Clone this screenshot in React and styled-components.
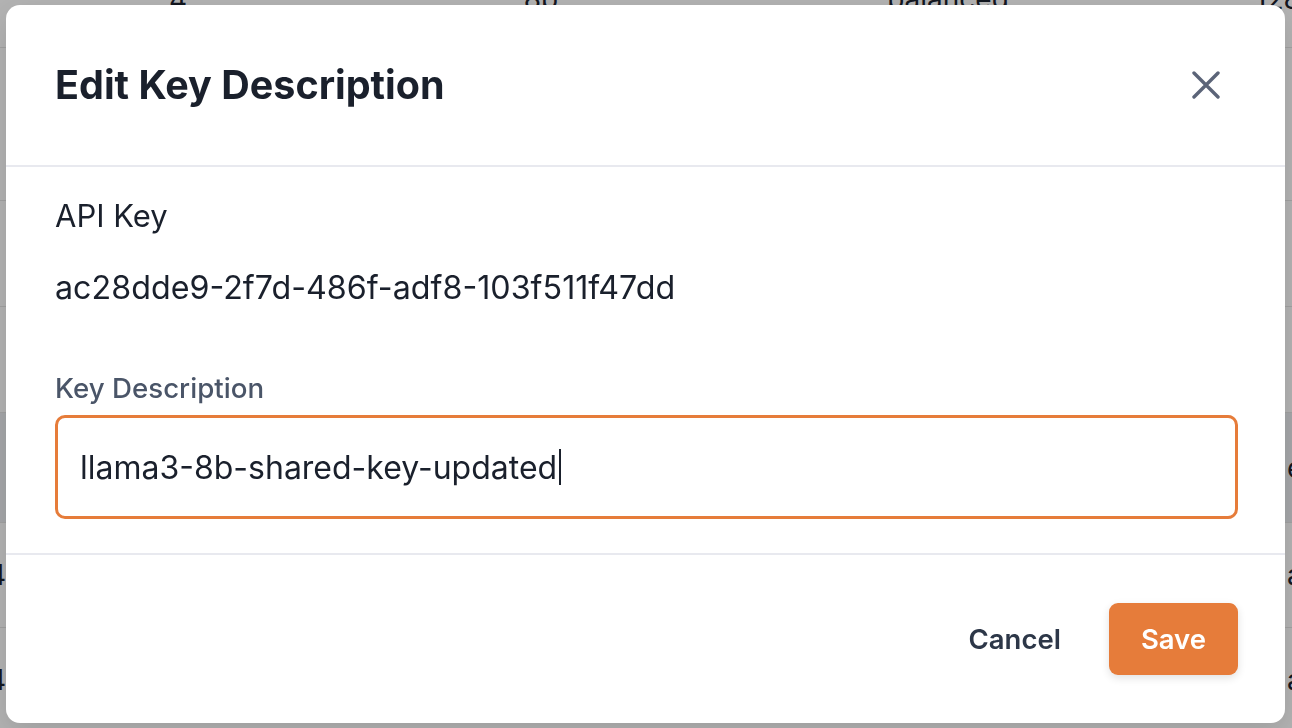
import React from 'react';
import styled, { createGlobalStyle } from 'styled-components';

const GlobalStyle = createGlobalStyle`
  html, body {
    margin: 0;
    padding: 0;
    height: 100%;
    overflow: hidden;
    background: #ffffff;
    font-family: Inter, "Noto Sans", sans-serif;
    color: #1a202c;
  }
`;

const topRow = ['4', '8b', 'balanced', '128'];
const rows = [
  { left: '', right: '', height: 153 },
  { left: '', right: '', height: 106 },
  { left: '', right: '', height: 106 },
  { left: '', right: 'enabled', height: 110, hover: true },
  { left: 'gpt-4', right: 'active', height: 105 },
  { left: 'gpt-4', right: 'active', height: 105 },
];

function BackgroundTable() {
  return (
    <Table>
      <TopRow>
        {topRow.map((cell, i) => (
          <TopCell key={i} $last={i === topRow.length - 1}>{cell}</TopCell>
        ))}
      </TopRow>
      {rows.map((row, i) => (
        <Row key={i} $height={row.height} $hover={row.hover}>
          <EdgeCell $end>{row.left}</EdgeCell>
          <span />
          <EdgeCell>{row.right}</EdgeCell>
        </Row>
      ))}
    </Table>
  );
}

function CloseIcon() {
  return (
    <svg width="28" height="28" viewBox="0 0 28 28" fill="none">
      <path d="M2 2 L26 26 M26 2 L2 26" stroke="#5b6478" strokeWidth="3.4" strokeLinecap="round" />
    </svg>
  );
}

export default function App() {
  return (
    <>
      <GlobalStyle />
      <BackgroundTable />
      <Overlay>
        <Modal>
          <Header>
            <Title>Edit Key Description</Title>
            <CloseButton aria-label="Close">
              <CloseIcon />
            </CloseButton>
          </Header>
          <Divider />
          <Body>
            <KeyLabel>API Key</KeyLabel>
            <KeyValue>ac28dde9-2f7d-486f-adf8-103f511f47dd</KeyValue>
            <FieldLabel>Key Description</FieldLabel>
            <InputBox>
              <span>llama3-8b-shared-key-updated</span>
              <Caret />
            </InputBox>
          </Body>
          <Divider />
          <Footer>
            <Button $variant="ghost">Cancel</Button>
            <Button $variant="primary">Save</Button>
          </Footer>
        </Modal>
      </Overlay>
    </>
  );
}

const Table = styled.div`
  margin-top: -58px;
  font-size: 28px;
  color: #1a202c;
`;

const TopRow = styled.div`
  display: grid;
  grid-template-columns: 356px 370px 444px 1fr;
  align-items: center;
  height: 97px;
  border-bottom: 1px solid #e6e6e6;
  padding-top: 8px;
`;

const TopCell = styled.div`
  text-align: ${p => (p.$last ? 'left' : 'center')};
  padding-left: ${p => (p.$last ? '85px' : '0')};
  white-space: nowrap;
`;

const Row = styled.div`
  display: grid;
  grid-template-columns: 6px 1fr 5px;
  align-items: center;
  height: ${p => p.$height}px;
  box-sizing: border-box;
  border-bottom: 1px solid #e6e6e6;
  background: ${p => (p.$hover ? '#eceef2' : 'transparent')};
`;

const EdgeCell = styled.div`
  display: flex;
  justify-content: ${p => (p.$end ? 'flex-end' : 'flex-start')};
  white-space: nowrap;
`;

const Overlay = styled.div`
  position: fixed;
  inset: 0;
  display: flex;
  padding: 5px 7px 5px 6px;
  background: rgba(0, 0, 0, 0.3);
`;

const Modal = styled.div`
  flex: 1;
  display: flex;
  flex-direction: column;
  background: #ffffff;
  border-radius: 14px;
  box-shadow: 0 10px 30px rgba(0, 0, 0, 0.12);
`;

const Header = styled.div`
  height: 160px;
  display: flex;
  align-items: center;
  justify-content: space-between;
  padding: 0 50px 0 49px;
`;

const Title = styled.h2`
  margin: 0;
  font-size: 39.5px;
  font-weight: 700;
  color: #1a202c;
`;

const CloseButton = styled.button`
  width: 58px;
  height: 58px;
  display: flex;
  align-items: center;
  justify-content: center;
  border: none;
  border-radius: 8px;
  background: transparent;
  padding: 0;
`;

const Divider = styled.div`
  height: 2px;
  background: #e8e9ef;
`;

const Body = styled.div`
  flex: 1;
  display: flex;
  flex-direction: column;
  padding: 26px 47px 0 49px;
`;

const KeyLabel = styled.div`
  font-size: 31px;
  line-height: 46px;
  color: #1a202c;
`;

const KeyValue = styled.div`
  margin-top: 26px;
  font-size: 32.25px;
  line-height: 46px;
  color: #1a202c;
`;

const FieldLabel = styled.div`
  margin-top: 56px;
  font-size: 27.7px;
  line-height: 42px;
  font-weight: 500;
  color: #4a5568;
`;

const InputBox = styled.div`
  margin-top: 6px;
  height: 104px;
  box-sizing: border-box;
  display: flex;
  align-items: center;
  padding: 0 22px;
  border: 3px solid #e67c3a;
  border-radius: 10px;
  font-size: 32px;
  color: #1a202c;
`;

const Caret = styled.span`
  width: 2px;
  height: 36px;
  margin-left: 2px;
  background: #1a202c;
`;

const Footer = styled.div`
  height: 168px;
  display: flex;
  align-items: center;
  justify-content: flex-end;
  gap: 16px;
  padding: 0 47px;
`;

const Button = styled.button`
  height: 72px;
  padding: 0 32px;
  border: none;
  border-radius: 9px;
  font-family: Inter, "Noto Sans", sans-serif;
  font-size: 27.5px;
  font-weight: 600;
  color: ${p => (p.$variant === 'primary' ? '#ffffff' : '#2d3748')};
  background: ${p => (p.$variant === 'primary' ? '#e67c3a' : 'transparent')};
  box-shadow: ${p => (p.$variant === 'primary' ? '0 3px 8px rgba(0, 0, 0, 0.12)' : 'none')};
`;
